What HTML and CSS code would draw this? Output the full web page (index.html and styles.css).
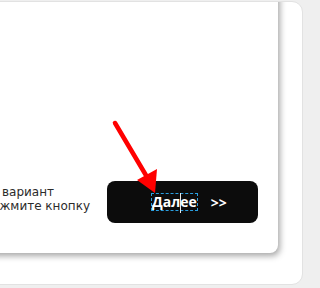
FILE: index.html
```html
<!DOCTYPE html>
<html lang="ru">
<head>
<meta charset="utf-8">
<link rel="stylesheet" href="styles.css">
</head>
<body>
<div class="panel">
  <div class="card">
    <div class="footer">
      <div class="hint">
        <div class="line">Выберите вариант</div>
        <div class="line">Теперь нажмите кнопку</div>
      </div>
      <button class="next">
        <span class="label">Дал<span class="caret"></span>ее</span>
        <span class="chev">&gt;&gt;</span>
      </button>
    </div>
  </div>
</div>
<svg class="arrow" width="304" height="288" viewBox="0 0 304 288">
  <line x1="115" y1="123" x2="147" y2="177" stroke="#ff0000" stroke-width="4.5" stroke-linecap="round"/>
  <polygon points="137,180 157,169 155,193" fill="#ff0000"/>
</svg>
</body>
</html>
```
FILE: styles.css
```css
html, body {
  margin: 0;
  padding: 0;
}
body {
  width: 304px;
  height: 288px;
  overflow: hidden;
  background: #efefef;
  position: relative;
  font-family: "Open Sans", "Liberation Sans", sans-serif;
}
.panel {
  margin: 1px 1px 0 -60px;
  height: 282px;
  background: #ffffff;
  border: 1px solid #e2e2e2;
  border-radius: 11px;
  overflow: hidden;
}
.card {
  margin: -30px 24px 0 0;
  height: 281px;
  background: #ffffff;
  border-radius: 8px;
  box-shadow: 2px 3px 6px rgba(0, 0, 0, 0.35);
  display: flex;
  flex-direction: column;
  justify-content: flex-end;
  padding: 0 20px 30px 0;
  box-sizing: border-box;
}
.footer {
  display: flex;
  align-items: center;
  justify-content: flex-end;
  gap: 17px;
}
.hint {
  font-family: "DejaVu Sans", "Open Sans", sans-serif;
  font-size: 12px;
  line-height: 14px;
  color: #2b2b2b;
  white-space: nowrap;
  margin-top: -6px;
  padding-left: 2px;
}
.next {
  width: 151px;
  height: 42px;
  flex: none;
  background: #0c0c0c;
  border: none;
  border-radius: 8px;
  display: flex;
  align-items: center;
  padding: 0 0 0 44px;
  gap: 13px;
  font-family: "Open Sans", "Liberation Sans", sans-serif;
  font-weight: bold;
  font-size: 14px;
  color: #ffffff;
}
.label {
  border: 1px dashed #2a9fe0;
  padding: 0;
  line-height: 15px;
}
.caret {
  display: inline-block;
  width: 1px;
  height: 20px;
  margin: -3px -1px -3px 0;
  vertical-align: middle;
  background: #e8e8e8;
}
.arrow {
  position: absolute;
  left: 0;
  top: 0;
}
```
